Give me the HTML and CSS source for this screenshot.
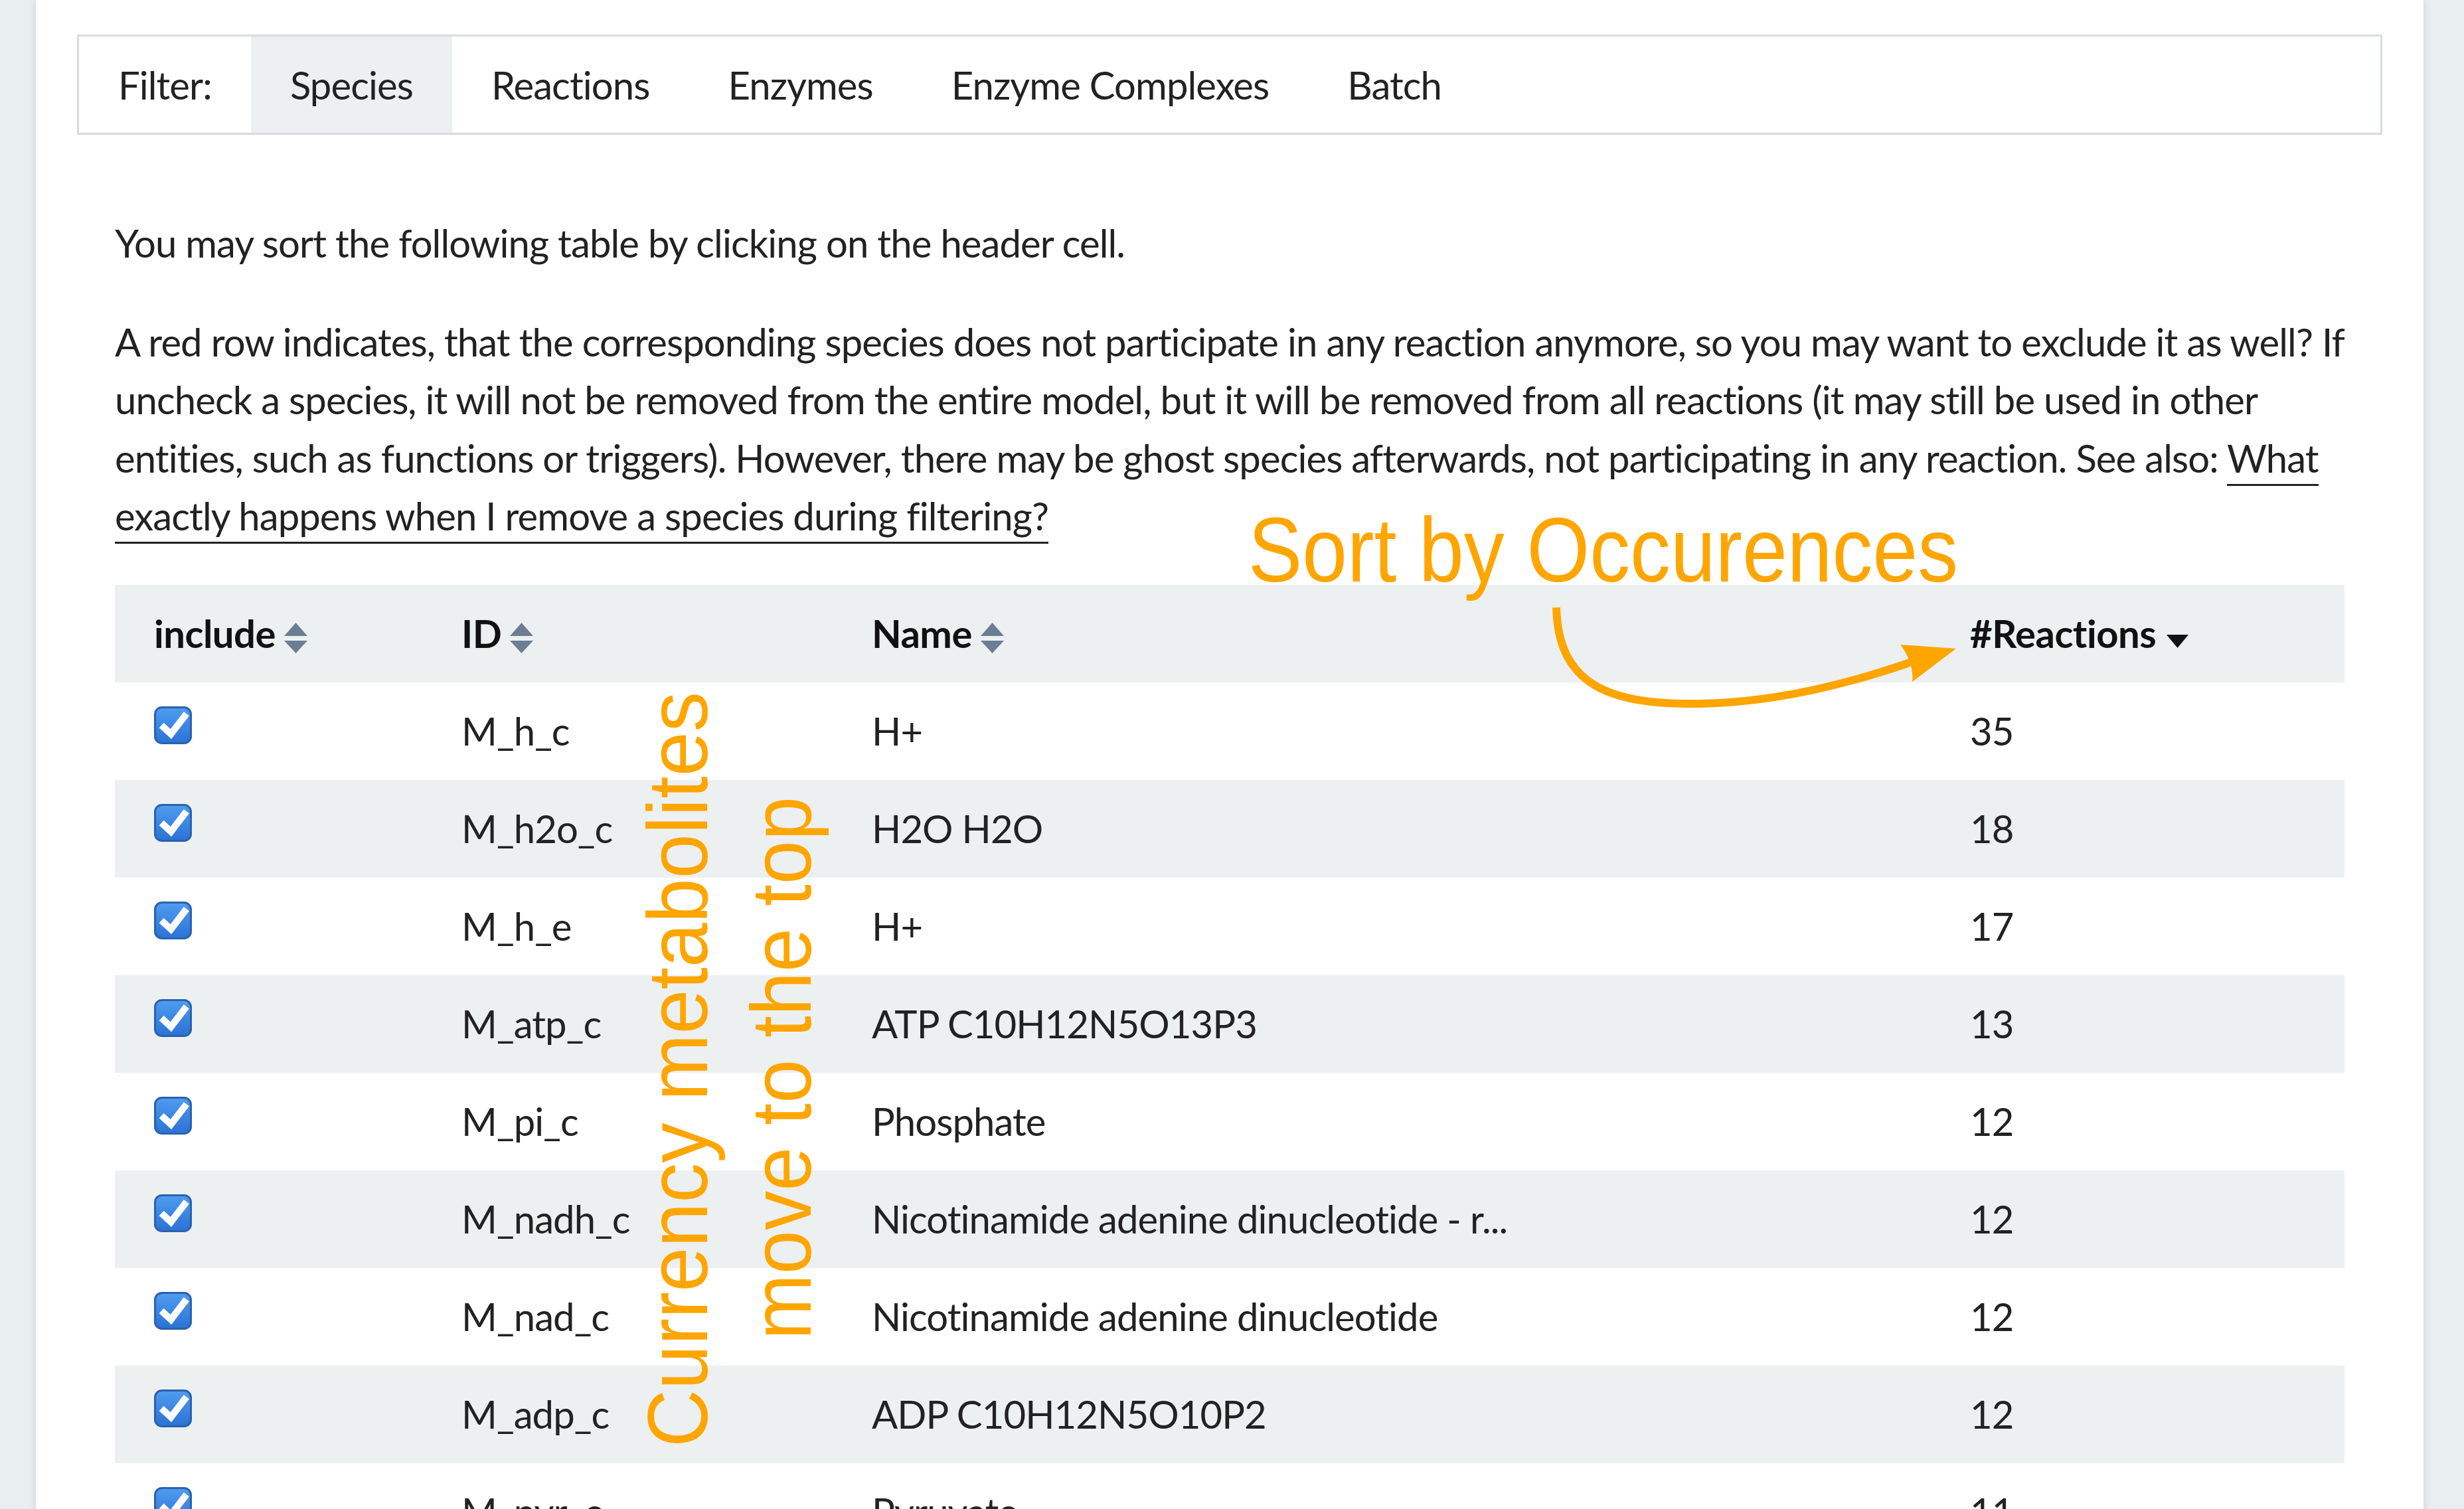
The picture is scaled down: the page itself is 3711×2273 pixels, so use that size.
FILE: index.html
```html
<!DOCTYPE html>
<html lang="en">
<head>
<meta charset="utf-8">
<title>Filter species</title>
<link rel="stylesheet" href="styles.css">
</head>
<body>
<svg class="defs" width="0" height="0" aria-hidden="true">
  <defs>
    <linearGradient id="cbfill" x1="0" y1="0" x2="0" y2="1">
      <stop offset="0" stop-color="#4f9cf0"/>
      <stop offset="1" stop-color="#2a72d6"/>
    </linearGradient>
    <symbol id="cb" viewBox="0 0 56 56">
      <rect x="1.5" y="1.5" width="53" height="53" rx="10" fill="url(#cbfill)" stroke="#2b62ad" stroke-width="3"/>
      <path d="M11 28 L25 41 L48 11" fill="none" stroke="#fff" stroke-width="10" stroke-linejoin="miter"/>
    </symbol>
    <symbol id="sortboth" viewBox="0 0 35 46">
      <path d="M17.5 0 L35 20 L0 20 Z" fill="#6c7e93"/>
      <path d="M0 27 L35 27 L17.5 46 Z" fill="#6c7e93"/>
    </symbol>
    <symbol id="sortdesc" viewBox="0 0 33 20">
      <path d="M0 0 L33 0 L16.5 20 Z" fill="#111"/>
    </symbol>
  </defs>
</svg>

<div class="page">
  <nav class="filter">
    <span class="filter-item">Filter:</span>
    <a class="filter-item active">Species</a>
    <a class="filter-item">Reactions</a>
    <a class="filter-item">Enzymes</a>
    <a class="filter-item">Enzyme Complexes</a>
    <a class="filter-item">Batch</a>
  </nav>

  <div class="content">
    <p class="first">You may sort the following table by clicking on the header cell.</p>
    <p class="second">A red row indicates, that the corresponding species does not participate in any reaction anymore, so you may want to exclude it as well? If<br>uncheck a species, it will not be removed from the entire model, but it will be removed from all reactions (it may still be used in other<br>entities, such as functions or triggers). However, there may be ghost species afterwards, not participating in any reaction. See also: <a class="help">What<br>exactly happens when I remove a species during filtering?</a></p>

    <table class="species">
      <colgroup>
        <col class="c-include"><col class="c-id"><col class="c-name"><col class="c-count">
      </colgroup>
      <thead>
        <tr>
          <th>include<svg class="sort"><use href="#sortboth"/></svg></th>
          <th>ID<svg class="sort"><use href="#sortboth"/></svg></th>
          <th>Name<svg class="sort"><use href="#sortboth"/></svg></th>
          <th>#Reactions<svg class="sort-desc"><use href="#sortdesc"/></svg></th>
        </tr>
      </thead>
      <tbody>
        <tr><td><svg class="check"><use href="#cb"/></svg></td><td>M_h_c</td><td>H+</td><td>35</td></tr>
        <tr><td><svg class="check"><use href="#cb"/></svg></td><td>M_h2o_c</td><td>H2O H2O</td><td>18</td></tr>
        <tr><td><svg class="check"><use href="#cb"/></svg></td><td>M_h_e</td><td>H+</td><td>17</td></tr>
        <tr><td><svg class="check"><use href="#cb"/></svg></td><td>M_atp_c</td><td>ATP C10H12N5O13P3</td><td>13</td></tr>
        <tr><td><svg class="check"><use href="#cb"/></svg></td><td>M_pi_c</td><td>Phosphate</td><td>12</td></tr>
        <tr><td><svg class="check"><use href="#cb"/></svg></td><td>M_nadh_c</td><td>Nicotinamide adenine dinucleotide - r...</td><td>12</td></tr>
        <tr><td><svg class="check"><use href="#cb"/></svg></td><td>M_nad_c</td><td>Nicotinamide adenine dinucleotide</td><td>12</td></tr>
        <tr><td><svg class="check"><use href="#cb"/></svg></td><td>M_adp_c</td><td>ADP C10H12N5O10P2</td><td>12</td></tr>
        <tr><td><svg class="check"><use href="#cb"/></svg></td><td>M_pyr_c</td><td>Pyruvate</td><td>11</td></tr>
        <tr><td><svg class="check"><use href="#cb"/></svg></td><td>M_accoa_c</td><td>Acetyl-CoA</td><td>10</td></tr>
      </tbody>
    </table>
  </div>
</div>

<svg class="annotations" viewBox="0 0 3711 2273" aria-hidden="true">
  <text class="note-h" x="1880" y="876" textLength="1069" lengthAdjust="spacingAndGlyphs">Sort by Occurences</text>
  <path class="arrow-line" d="M2344 915 C2347 1030 2420 1062 2560 1060 C2680 1058 2800 1025 2885 995"/>
  <path class="arrow-head" d="M2946 977 L2862 971 Q2883 999 2880 1027 Z"/>
  <text class="note-v" transform="translate(1065 2180) rotate(-90)" textLength="1138" lengthAdjust="spacingAndGlyphs">Currency metabolites</text>
  <text class="note-v" transform="translate(1221 2018) rotate(-90)" textLength="818" lengthAdjust="spacingAndGlyphs">move to the top</text>
</svg>
</body>
</html>
```

FILE: styles.css
```css
html {
  overflow: hidden;
}

body {
  margin: 0;
  position: relative;
  min-height: 2273px;
  background: #e9eef0;
  font-family: Lato, "Source Sans Pro", "Noto Sans", sans-serif;
  font-size: 58px;
  line-height: 87.5px;
  letter-spacing: -0.9px;
  color: #222;
}

.defs {
  position: absolute;
}

.page {
  box-sizing: border-box;
  width: 3596px;
  margin-left: 54px;
  min-height: 2600px;
  padding: 52px 62px 0;
  background: #fff;
  box-shadow: 0 0 12px rgba(0, 0, 0, 0.13);
}

/* filter bar */
.filter {
  display: flex;
  box-sizing: border-box;
  height: 151px;
  border: 3px solid #d7dbdd;
}

.filter-item {
  display: flex;
  align-items: center;
  padding: 0 59px;
  color: #222;
  text-decoration: none;
}

.filter-item.active {
  background: #ecf0f1;
}

/* text */
.content {
  padding: 0 57px;
}

.content p {
  margin: 0;
  white-space: nowrap;
}

.content .first {
  margin-top: 119px;
}

.content .second {
  margin-top: 61px;
}

.help {
  color: #222;
  text-decoration: none;
  border-bottom: 3px solid #222;
  padding-bottom: 5px;
}

/* table */
.species {
  width: 3358px;
  margin-top: 60px;
  border-collapse: collapse;
  table-layout: fixed;
}

.c-include { width: 463px; }
.c-id { width: 618px; }
.c-name { width: 1654px; }
.c-count { width: 623px; }

.species th,
.species td {
  padding: 29.75px 0 29.75px 59px;
  line-height: 87.5px;
  text-align: left;
  white-space: nowrap;
}

.species th {
  font-weight: 700;
  color: #111;
  letter-spacing: -0.5px;
}

.species thead tr,
.species tbody tr:nth-child(even) {
  background: #ecf0f1;
}

.sort {
  width: 35px;
  height: 46px;
  margin-left: 13px;
  vertical-align: -8px;
}

.sort-desc {
  width: 33px;
  height: 20px;
  margin-left: 16px;
  vertical-align: 0;
}

.check {
  display: inline-block;
  width: 57px;
  height: 57px;
  vertical-align: top;
  margin-top: 7px;
}

/* annotations drawn on top */
.annotations {
  position: absolute;
  left: 0;
  top: 0;
  width: 3711px;
  height: 2273px;
  pointer-events: none;
}

.note-h,
.note-v {
  font-family: "Liberation Sans", Arial, sans-serif;
  letter-spacing: 0;
  fill: #ffa500;
}

.note-h {
  font-size: 138px;
}

.note-v {
  font-size: 128px;
}

.arrow-line {
  fill: none;
  stroke: #ffa500;
  stroke-width: 12px;
}

.arrow-head {
  fill: #ffa500;
}
```
